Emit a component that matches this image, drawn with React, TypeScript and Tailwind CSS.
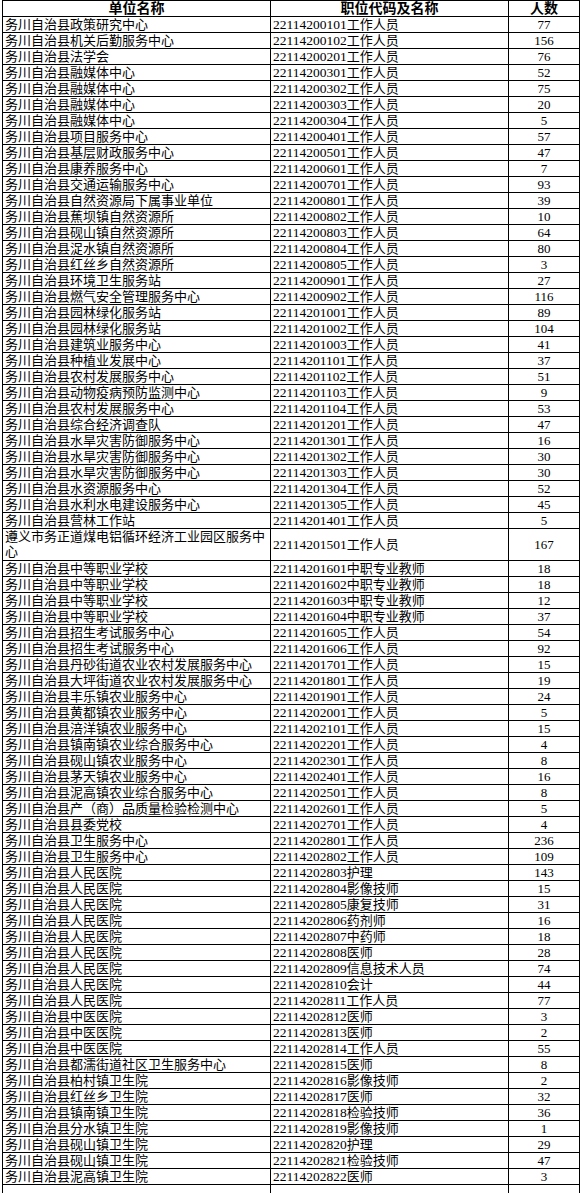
import React from "react";

type Row = [string, string, string, number];

const P = "务川自治县";

const rows: Row[] = [
  [P + "政策研究中心", "22114200101", "工作人员", 77],
  [P + "机关后勤服务中心", "22114200102", "工作人员", 156],
  [P + "法学会", "22114200201", "工作人员", 76],
  [P + "融媒体中心", "22114200301", "工作人员", 52],
  [P + "融媒体中心", "22114200302", "工作人员", 75],
  [P + "融媒体中心", "22114200303", "工作人员", 20],
  [P + "融媒体中心", "22114200304", "工作人员", 5],
  [P + "项目服务中心", "22114200401", "工作人员", 57],
  [P + "基层财政服务中心", "22114200501", "工作人员", 47],
  [P + "康养服务中心", "22114200601", "工作人员", 7],
  [P + "交通运输服务中心", "22114200701", "工作人员", 93],
  [P + "自然资源局下属事业单位", "22114200801", "工作人员", 39],
  [P + "蕉坝镇自然资源所", "22114200802", "工作人员", 10],
  [P + "砚山镇自然资源所", "22114200803", "工作人员", 64],
  [P + "浞水镇自然资源所", "22114200804", "工作人员", 80],
  [P + "红丝乡自然资源所", "22114200805", "工作人员", 3],
  [P + "环境卫生服务站", "22114200901", "工作人员", 27],
  [P + "燃气安全管理服务中心", "22114200902", "工作人员", 116],
  [P + "园林绿化服务站", "22114201001", "工作人员", 89],
  [P + "园林绿化服务站", "22114201002", "工作人员", 104],
  [P + "建筑业服务中心", "22114201003", "工作人员", 41],
  [P + "种植业发展中心", "22114201101", "工作人员", 37],
  [P + "农村发展服务中心", "22114201102", "工作人员", 51],
  [P + "动物疫病预防监测中心", "22114201103", "工作人员", 9],
  [P + "农村发展服务中心", "22114201104", "工作人员", 53],
  [P + "综合经济调查队", "22114201201", "工作人员", 47],
  [P + "水旱灾害防御服务中心", "22114201301", "工作人员", 16],
  [P + "水旱灾害防御服务中心", "22114201302", "工作人员", 30],
  [P + "水旱灾害防御服务中心", "22114201303", "工作人员", 30],
  [P + "水资源服务中心", "22114201304", "工作人员", 52],
  [P + "水利水电建设服务中心", "22114201305", "工作人员", 45],
  [P + "营林工作站", "22114201401", "工作人员", 5],
  ["遵义市务正道煤电铝循环经济工业园区服务中心", "22114201501", "工作人员", 167],
  [P + "中等职业学校", "22114201601", "中职专业教师", 18],
  [P + "中等职业学校", "22114201602", "中职专业教师", 18],
  [P + "中等职业学校", "22114201603", "中职专业教师", 12],
  [P + "中等职业学校", "22114201604", "中职专业教师", 37],
  [P + "招生考试服务中心", "22114201605", "工作人员", 54],
  [P + "招生考试服务中心", "22114201606", "工作人员", 92],
  [P + "丹砂街道农业农村发展服务中心", "22114201701", "工作人员", 15],
  [P + "大坪街道农业农村发展服务中心", "22114201801", "工作人员", 19],
  [P + "丰乐镇农业服务中心", "22114201901", "工作人员", 24],
  [P + "黄都镇农业服务中心", "22114202001", "工作人员", 5],
  [P + "涪洋镇农业服务中心", "22114202101", "工作人员", 15],
  [P + "镇南镇农业综合服务中心", "22114202201", "工作人员", 4],
  [P + "砚山镇农业服务中心", "22114202301", "工作人员", 8],
  [P + "茅天镇农业服务中心", "22114202401", "工作人员", 16],
  [P + "泥高镇农业综合服务中心", "22114202501", "工作人员", 8],
  [P + "产（商）品质量检验检测中心", "22114202601", "工作人员", 5],
  [P + "县委党校", "22114202701", "工作人员", 4],
  [P + "卫生服务中心", "22114202801", "工作人员", 236],
  [P + "卫生服务中心", "22114202802", "工作人员", 109],
  [P + "人民医院", "22114202803", "护理", 143],
  [P + "人民医院", "22114202804", "影像技师", 15],
  [P + "人民医院", "22114202805", "康复技师", 31],
  [P + "人民医院", "22114202806", "药剂师", 16],
  [P + "人民医院", "22114202807", "中药师", 18],
  [P + "人民医院", "22114202808", "医师", 28],
  [P + "人民医院", "22114202809", "信息技术人员", 74],
  [P + "人民医院", "22114202810", "会计", 44],
  [P + "人民医院", "22114202811", "工作人员", 77],
  [P + "中医医院", "22114202812", "医师", 3],
  [P + "中医医院", "22114202813", "医师", 2],
  [P + "中医医院", "22114202814", "工作人员", 55],
  [P + "都濡街道社区卫生服务中心", "22114202815", "医师", 8],
  [P + "柏村镇卫生院", "22114202816", "影像技师", 2],
  [P + "红丝乡卫生院", "22114202817", "医师", 32],
  [P + "镇南镇卫生院", "22114202818", "检验技师", 36],
  [P + "分水镇卫生院", "22114202819", "影像技师", 1],
  [P + "砚山镇卫生院", "22114202820", "护理", 29],
  [P + "砚山镇卫生院", "22114202821", "检验技师", 47],
  [P + "泥高镇卫生院", "22114202822", "医师", 3],
];

const FONT = {
  fontFamily: '"Liberation Serif", "Noto Sans CJK SC", serif',
};

function Row({ r }: { r: Row }) {
  const [unit, code, title, n] = r;
  const tall = unit.length > 20;
  const h = tall ? "h-[32px]" : "h-[16px]";
  return (
    <div className={`grid grid-cols-[268px_238px_71px] ${h}`}>
      <div className="border-r border-b border-black pl-[2px] leading-[15px] overflow-hidden whitespace-nowrap">
        {tall ? (
          <>
            {unit.slice(0, 20)}
            <br />
            {unit.slice(20)}
          </>
        ) : (
          unit
        )}
      </div>
      <div className="border-r border-b border-black pl-[2px] leading-[15px] flex items-center whitespace-nowrap">
        <span className="text-[13.5px]">{code}</span>
        <span>{title}</span>
      </div>
      <div className="border-r border-b border-black leading-[15px] flex items-center justify-center">
        {n}
      </div>
    </div>
  );
}

export default function App() {
  return (
    <div className="bg-white w-[582px] h-[1193px] overflow-hidden text-black text-[13px]" style={FONT}>
      <div className="ml-[2px] w-[578px] border-l border-t border-black">
        <div className="grid grid-cols-[268px_238px_71px] h-[16px] font-bold text-[14px] leading-[15px]">
          <div className="border-r border-b border-black text-center">单位名称</div>
          <div className="border-r border-b border-black text-center">职位代码及名称</div>
          <div className="border-r border-b border-black text-center">人数</div>
        </div>
        {rows.map((r, i) => (
          <Row key={i} r={r} />
        ))}
        <div className="grid grid-cols-[268px_238px_71px] h-[16px]">
          <div className="border-r border-b border-black" />
          <div className="border-r border-b border-black" />
          <div className="border-r border-b border-black" />
        </div>
      </div>
    </div>
  );
}
